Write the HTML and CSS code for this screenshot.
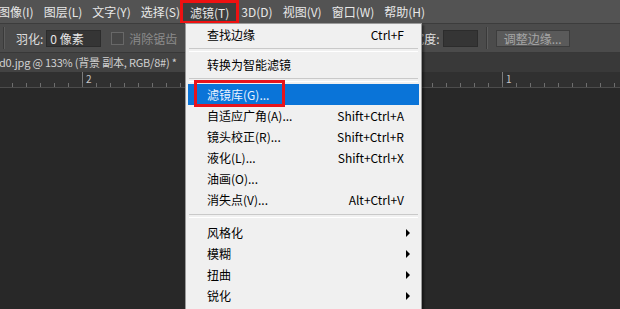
FILE: index.html
```html
<!DOCTYPE html>
<html lang="zh-CN">
  <head>
    <meta charset="UTF-8" />
    <title>滤镜菜单</title>
    <link rel="stylesheet" href="styles.css">
  </head>
  <body>
    <div class="app">
      <!-- 菜单栏 -->
      <div class="menubar">
        <span class="first">图像(I)</span>
        <span>图层(L)</span>
        <span>文字(Y)</span>
        <span>选择(S)</span>
        <span class="open">滤镜(T)</span>
        <span>3D(D)</span>
        <span>视图(V)</span>
        <span>窗口(W)</span>
        <span>帮助(H)</span>
      </div>
      <!-- 选项栏 -->
      <div class="options">
        <i class="sep"></i>
        <label class="label">羽化:</label>
        <div class="field">0 像素</div>
        <i class="check"></i>
        <span class="off">消除锯齿</span>
        <div class="right">
          <label class="label">宽度:</label>
          <div class="field small"></div>
          <i class="sep"></i>
          <div class="btn">调整边缘...</div>
        </div>
      </div>
      <!-- 文档标签 -->
      <div class="tabs">
        <div class="tab">d0.jpg @ 133% (背景 副本, RGB/8#) *</div>
      </div>
      <!-- 标尺 -->
      <div class="ruler">
        <span class="major m2">2</span>
        <span class="major m1">1</span>
      </div>
      <div class="canvas"></div>

      <!-- 滤镜下拉菜单 -->
      <ul class="dropdown">
        <li><span>查找边缘</span><em>Ctrl+F</em></li>
        <li class="line"></li>
        <li><span>转换为智能滤镜</span></li>
        <li class="line"></li>
        <li class="hover"><span>滤镜库(G)...</span><b class="mark"></b></li>
        <li><span>自适应广角(A)...</span><em>Shift+Ctrl+A</em></li>
        <li><span>镜头校正(R)...</span><em>Shift+Ctrl+R</em></li>
        <li><span>液化(L)...</span><em>Shift+Ctrl+X</em></li>
        <li><span>油画(O)...</span></li>
        <li><span>消失点(V)...</span><em>Alt+Ctrl+V</em></li>
        <li class="line wide"></li>
        <li class="sub"><span>风格化</span></li>
        <li class="sub"><span>模糊</span></li>
        <li class="sub"><span>扭曲</span></li>
        <li class="sub"><span>锐化</span></li>
      </ul>
    </div>
  </body>
</html>
```

FILE: styles.css
```css
* {
  margin: 0;
  padding: 0;
  box-sizing: border-box;
}

ul {
  list-style: none;
}

body {
  width: 620px;
  height: 309px;
  overflow: hidden;
  background: #282828;
  font-family: "Noto Sans CJK SC", "Noto Sans", sans-serif;
  font-size: 12px;
}

.app {
  position: relative;
  height: 309px;
  display: flex;
  flex-direction: column;
}

/* 菜单栏 */
.menubar {
  height: 24px;
  display: flex;
  align-items: stretch;
  background: #535353;
  border-bottom: 1px solid #3c3c3c;
  color: #e8e8e8;
}
.menubar span {
  display: flex;
  align-items: center;
  padding: 0 5px;
}
.menubar .first {
  margin-left: -7px;
}
/* 红框标注盖住前一项的右括号 */
.menubar .open {
  position: relative;
  margin-left: -5px;
  margin-right: -3px;
  background: #3e3e3e;
  border: 3px solid #ee1111;
  border-bottom-width: 2px;
  padding: 0 7px;
}

/* 选项栏 */
.options {
  height: 29px;
  display: flex;
  align-items: center;
  background: #4b4b4b;
  border-bottom: 1px solid #383838;
  color: #dedede;
}
.sep {
  width: 2px;
  height: 22px;
  border-left: 1px solid #3a3a3a;
  border-right: 1px solid #5c5c5c;
}
.options > .sep {
  margin-left: 3px;
}
.label {
  margin-left: 11px;
  margin-right: 3px;
}
.field {
  width: 55px;
  height: 17px;
  line-height: 15px;
  padding-left: 3px;
  background: #353535;
  border: 1px solid #2c2c2c;
  color: #e6e6e6;
}
.field.small {
  width: 35px;
  margin-right: 8px;
}
.check {
  width: 13px;
  height: 13px;
  margin-left: 10px;
  background: #474747;
  border: 1px solid #686868;
}
.off {
  margin-left: 5px;
  color: #8c8c8c;
}
.right {
  display: flex;
  align-items: center;
  margin-left: 224px;
}
.btn {
  width: 74px;
  height: 17px;
  margin-left: 8px;
  line-height: 15px;
  text-align: center;
  background: #5a5a5a;
  border: 1px solid #3d3d3d;
  color: #a6a6a6;
}

/* 文档标签 */
.tabs {
  height: 19px;
  display: flex;
  background: #393939;
}
.tab {
  width: 188px;
  line-height: 19px;
  margin-left: -1px;
  background: #434343;
  color: #d0d0d0;
  font-size: 11px;
  letter-spacing: -0.2px;
  white-space: nowrap;
}

/* 标尺 */
.ruler {
  position: relative;
  height: 16px;
  background: #303030;
  border-bottom: 1px solid #4c4c4c;
  color: #c8c8c8;
  font-size: 10px;
}
.ruler::after {
  content: "";
  position: absolute;
  left: 0;
  right: 0;
  bottom: 0;
  height: 4px;
  background: repeating-linear-gradient(to right, transparent 0 12px, #6e6e6e 12px 13px, transparent 13px 14px);
}
.major {
  position: absolute;
  top: 0;
  height: 15px;
  padding-left: 3px;
  line-height: 13px;
  border-left: 1px solid #7c7c7c;
}
.m2 {
  left: 82px;
}
.m1 {
  left: 502px;
}

.canvas {
  flex: 1;
  background: #282828;
}

/* 下拉菜单 */
.dropdown {
  position: absolute;
  left: 185px;
  top: 23px;
  width: 237px;
  height: 300px;
  padding: 0 2px;
  background: #f0f0f0;
  border: 1px solid #9a9a9a;
  box-shadow: 2px 2px 2px rgba(0, 0, 0, 0.45);
  color: #000;
}
.dropdown li {
  position: relative;
  height: 21px;
  display: flex;
  align-items: center;
  justify-content: space-between;
  padding: 0 15px 0 19px;
}
.dropdown em {
  font-style: normal;
}
.dropdown .line {
  height: 9px;
  padding: 0;
  margin: 0 1px;
}
.dropdown .line.wide {
  height: 12px;
}
.dropdown .line::before {
  content: "";
  flex: 1;
  height: 2px;
  border-top: 1px solid #c9c9c9;
  border-bottom: 1px solid #ffffff;
}
.dropdown .hover {
  background: #0a74d8;
  color: #e8f2ff;
}
.mark {
  position: absolute;
  left: 6px;
  top: -4px;
  width: 91px;
  height: 27px;
  border: 3px solid #e8141c;
}
.sub::after {
  content: "";
  border-left: 4px solid #000;
  border-top: 4px solid transparent;
  border-bottom: 4px solid transparent;
  margin-right: -6px;
}
```
